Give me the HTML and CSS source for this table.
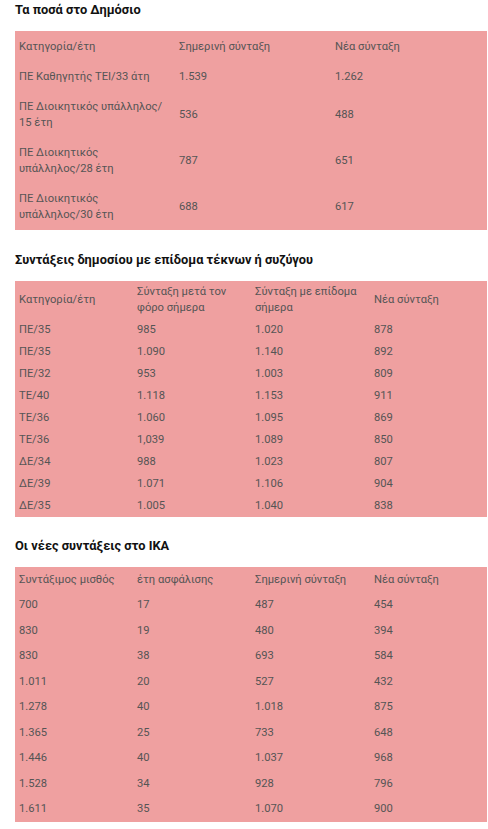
FILE: index.html
```html
<!DOCTYPE html>
<html lang="el">
<head>
<meta charset="utf-8">
<title>Συντάξεις</title>
<link rel="stylesheet" href="styles.css">
</head>
<body>
<div class="page">
  <h3 class="title">Τα ποσά στο Δημόσιο</h3>
  <table class="tbl t1">
    <colgroup><col class="c160"><col class="c156"><col class="c156"></colgroup>
    <tr><td>Κατηγορία/έτη</td><td>Σημερινή σύνταξη</td><td>Νέα σύνταξη</td></tr>
    <tr><td>ΠΕ Καθηγητής ΤΕΙ/33 άτη</td><td>1.539</td><td>1.262</td></tr>
    <tr><td>ΠΕ Διοικητικός υπάλληλος/ 15 έτη</td><td>536</td><td>488</td></tr>
    <tr><td>ΠΕ Διοικητικός υπάλληλος/28 έτη</td><td>787</td><td>651</td></tr>
    <tr><td>ΠΕ Διοικητικός υπάλληλος/30 έτη</td><td>688</td><td>617</td></tr>
  </table>

  <h3 class="title">Συντάξεις δημοσίου με επίδομα τέκνων ή συζύγου</h3>
  <table class="tbl t2">
    <colgroup><col class="c118"><col class="c118"><col class="c119"><col class="c117"></colgroup>
    <tr><td>Κατηγορία/έτη</td><td>Σύνταξη μετά τον φόρο σήμερα</td><td>Σύνταξη με επίδομα σήμερα</td><td>Νέα σύνταξη</td></tr>
    <tr><td>ΠΕ/35</td><td>985</td><td>1.020</td><td>878</td></tr>
    <tr><td>ΠΕ/35</td><td>1.090</td><td>1.140</td><td>892</td></tr>
    <tr><td>ΠΕ/32</td><td>953</td><td>1.003</td><td>809</td></tr>
    <tr><td>ΤΕ/40</td><td>1.118</td><td>1.153</td><td>911</td></tr>
    <tr><td>ΤΕ/36</td><td>1.060</td><td>1.095</td><td>869</td></tr>
    <tr><td>ΤΕ/36</td><td>1,039</td><td>1.089</td><td>850</td></tr>
    <tr><td>ΔΕ/34</td><td>988</td><td>1.023</td><td>807</td></tr>
    <tr><td>ΔΕ/39</td><td>1.071</td><td>1.106</td><td>904</td></tr>
    <tr><td>ΔΕ/35</td><td>1.005</td><td>1.040</td><td>838</td></tr>
  </table>

  <h3 class="title">Οι νέες συντάξεις στο ΙΚΑ</h3>
  <table class="tbl t3">
    <colgroup><col class="c118"><col class="c118"><col class="c119"><col class="c117"></colgroup>
    <tr><td>Συντάξιμος μισθός</td><td>έτη ασφάλισης</td><td>Σημερινή σύνταξη</td><td>Νέα σύνταξη</td></tr>
    <tr><td>700</td><td>17</td><td>487</td><td>454</td></tr>
    <tr><td>830</td><td>19</td><td>480</td><td>394</td></tr>
    <tr><td>830</td><td>38</td><td>693</td><td>584</td></tr>
    <tr><td>1.011</td><td>20</td><td>527</td><td>432</td></tr>
    <tr><td>1.278</td><td>40</td><td>1.018</td><td>875</td></tr>
    <tr><td>1.365</td><td>25</td><td>733</td><td>648</td></tr>
    <tr><td>1.446</td><td>40</td><td>1.037</td><td>968</td></tr>
    <tr><td>1.528</td><td>34</td><td>928</td><td>796</td></tr>
    <tr><td>1.611</td><td>35</td><td>1.070</td><td>900</td></tr>
  </table>
</div>
</body>
</html>
```

FILE: styles.css
```css
html, body {
  margin: 0;
  padding: 0;
  background: #ffffff;
}
body {
  font-family: Roboto, "Noto Sans", "DejaVu Sans", sans-serif;
}
.page {
  padding-left: 15px;
  width: 472px;
}
.title {
  margin: 0 0 11px 0;
  font-size: 12.8px;
  line-height: 20px;
  font-weight: bold;
  color: #111111;
}
.tbl {
  width: 472px;
  table-layout: fixed;
  border-collapse: collapse;
  border-spacing: 0;
  background: #efa0a0;
  margin-bottom: 19px;
}
.tbl.t1 {
  margin-bottom: 20px;
}
.tbl td {
  font-size: 11.2px;
  line-height: 16px;
  color: #555555;
  padding: 0 4px;
  vertical-align: middle;
  text-align: left;
}
.t1 td { padding-top: 7px; padding-bottom: 7px; }
.t1 tr:first-child td { padding-top: 8px; padding-bottom: 7px; }
.t2 td { padding-top: 3px; padding-bottom: 3px; }
.t3 td { padding-top: 4.75px; padding-bottom: 4.75px; }
.c160 { width: 160px; }
.c156 { width: 156px; }
.c118 { width: 118px; }
.c119 { width: 119px; }
.c117 { width: 117px; }
```
